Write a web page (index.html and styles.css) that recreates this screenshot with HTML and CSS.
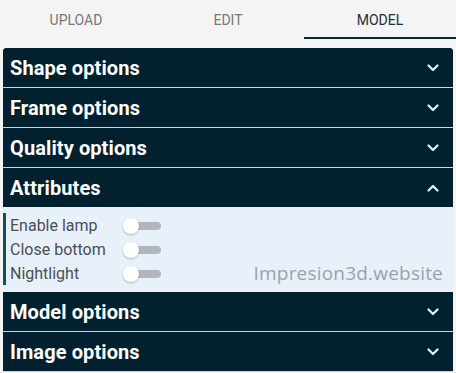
FILE: index.html
```html
<!DOCTYPE html>
<html>
<head>
<meta charset="utf-8">
<link rel="stylesheet" href="styles.css">
</head>
<body>
<div class="tabs">
  <div class="tab">UPLOAD</div>
  <div class="tab">EDIT</div>
  <div class="tab active">MODEL</div>
</div>
<div class="panel">
  <div class="head"><span>Shape options</span><svg class="chev" viewBox="0 0 12 8"><path d="M1.5 1.5 L6 6 L10.5 1.5"/></svg></div>
  <div class="head"><span>Frame options</span><svg class="chev" viewBox="0 0 12 8"><path d="M1.5 1.5 L6 6 L10.5 1.5"/></svg></div>
  <div class="head"><span>Quality options</span><svg class="chev" viewBox="0 0 12 8"><path d="M1.5 1.5 L6 6 L10.5 1.5"/></svg></div>
  <div class="head open"><span>Attributes</span><svg class="chev" viewBox="0 0 12 8"><path d="M1.5 6.5 L6 2 L10.5 6.5"/></svg></div>
  <div class="body">
    <div class="row"><span class="lbl">Enable lamp</span><span class="toggle"><span class="knob"></span></span></div>
    <div class="row"><span class="lbl">Close bottom</span><span class="toggle"><span class="knob"></span></span></div>
    <div class="row"><span class="lbl">Nightlight</span><span class="toggle"><span class="knob"></span></span></div>
    <div class="mark">Impresion3d.website</div>
  </div>
  <div class="head"><span>Model options</span><svg class="chev" viewBox="0 0 12 8"><path d="M1.5 1.5 L6 6 L10.5 1.5"/></svg></div>
  <div class="head"><span>Image options</span><svg class="chev" viewBox="0 0 12 8"><path d="M1.5 1.5 L6 6 L10.5 1.5"/></svg></div>
</div>
</body>
</html>
```
FILE: styles.css
```css
html, body { margin: 0; padding: 0; }
body {
  background: #f4f4f4;
  font-family: Roboto, "Liberation Sans", sans-serif;
  width: 456px;
  height: 373px;
  overflow: hidden;
}
.tabs {
  display: flex;
  height: 40px;
}
.tab {
  flex: 1;
  display: flex;
  align-items: center;
  justify-content: center;
  font-size: 14px;
  color: #777;
  padding-top: 2px;
  box-sizing: border-box;
  border-bottom: 2px solid transparent;
  height: 39px;
}
.tab.active {
  color: #1f2f38;
  border-bottom-color: #0d2430;
}
.panel {
  margin: 8px 3px 0 3px;
  background: #02202e;
  border-radius: 4px 4px 0 0;
  overflow: hidden;
}
.head {
  height: 39px;
  border-bottom: 1px solid #b7dcec;
  display: flex;
  align-items: center;
  justify-content: space-between;
  padding: 0 14px 0 7px;
  color: #fff;
  font-weight: 700;
  font-size: 20px;
  letter-spacing: 0.1px;
  background: #02202e;
}
.head span { margin-top: 1px; }
.head.open { border-bottom: none; height: 39px; }
.chev {
  width: 12px;
  height: 8px;
  fill: none;
  stroke: #e4f3fa;
  stroke-width: 2.2;
  stroke-linecap: round;
  stroke-linejoin: round;
}
.body {
  background: #e8f0fa;
  padding: 6px 0 6px 0;
  position: relative;
  height: 73px;
}
.row {
  height: 24px;
  border-left: 3px solid #134f5c;
  display: flex;
  align-items: center;
  padding-left: 4px;
  padding-top: 1px;
  box-sizing: border-box;
}
.lbl {
  font-size: 16px;
  color: #4a4f55;
  width: 115px;
}
.toggle {
  position: relative;
  width: 36px;
  height: 8px;
  background: #b3b6bd;
  border-radius: 4px;
}
.knob {
  position: absolute;
  left: -2px;
  top: -4px;
  width: 16px;
  height: 16px;
  border-radius: 50%;
  background: #fff;
  box-shadow: 0 1px 2px rgba(0,0,0,0.25);
}
.mark {
  position: absolute;
  right: 10px;
  bottom: 6px;
  font-family: "Open Sans", sans-serif;
  font-size: 19px;
  color: #9aa3ab;
  letter-spacing: 0.2px;
}
```
